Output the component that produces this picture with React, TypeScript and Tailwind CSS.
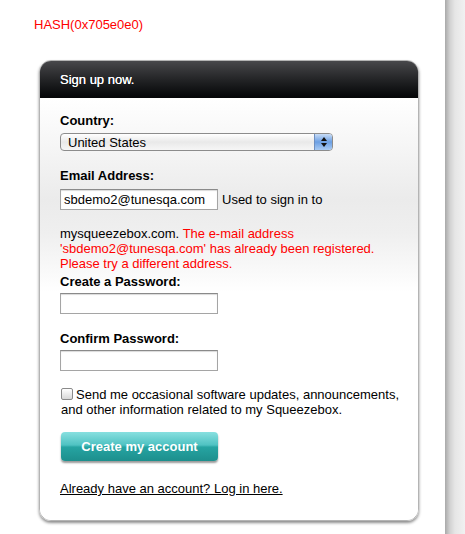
import React from "react";

function TextInput({ value }: { value?: string }) {
  return (
    <div className="w-[158px] h-[21px] bg-white border border-[#a5a5a5] border-t-[#8a8a8a] shadow-[inset_0_1px_1px_rgba(0,0,0,0.15)] px-[3px] flex items-center text-[13px] text-black">
      {value}
    </div>
  );
}

export default function App() {
  return (
    <div
      className="flex w-[465px] h-[534px] bg-white overflow-hidden text-[13px] leading-[15px] text-black"
      style={{ fontFamily: '"Liberation Sans", Arial, sans-serif' }}
    >
      <div className="flex-1">
        <p className="ml-[34px] mt-[17px] text-[#ff0000]">HASH(0x705e0e0)</p>

        <div className="ml-[39px] mt-[28px] w-[380px] rounded-[12px] border border-[#b4b4b4] shadow-[0_2px_3px_rgba(0,0,0,0.45)] overflow-hidden">
          <div className="h-[37px] bg-gradient-to-b from-[#48484b] to-[#050607] pl-[20px] flex items-center text-white [text-shadow:0_0_0.4px_#fff]">
            Sign up now.
          </div>

          <div className="pl-[20px] pr-[8px] pt-[15px] pb-[24px] bg-[linear-gradient(to_bottom,#ffffff_0%,#ebebeb_24%,#efefef_32%,#ffffff_46%,#ffffff_100%)]">
            <p className="font-bold">Country:</p>
            <div className="mt-[5px] w-[273px] h-[18px] rounded-[4px] border border-[#8c8c8c] bg-gradient-to-b from-white via-[#e9e9e9] to-[#f6f6f6] flex items-center overflow-hidden">
              <span className="pl-[7px] flex-1">United States</span>
              <div className="w-[18px] h-full bg-gradient-to-b from-[#c8dcf6] via-[#6b9fe3] to-[#a9cbf3] border-l border-[#6e8fc0] flex flex-col items-center justify-center gap-[2px]">
                <svg width="6" height="4" viewBox="0 0 6 4">
                  <path d="M3 0 L6 4 L0 4 Z" fill="#111" />
                </svg>
                <svg width="6" height="4" viewBox="0 0 6 4">
                  <path d="M0 0 L6 0 L3 4 Z" fill="#111" />
                </svg>
              </div>
            </div>

            <p className="font-bold mt-[17px]">Email Address:</p>
            <div className="mt-[6px] flex items-center">
              <TextInput value="sbdemo2@tunesqa.com" />
              <span className="ml-[4px]">Used to sign in to</span>
            </div>
            <p className="mt-[16px] pr-[12px]">
              mysqueezebox.com.{" "}
              <span className="text-[#ff0000]">
                The e-mail address 'sbdemo2@tunesqa.com' has already been registered. Please try a
                different address.
              </span>
            </p>

            <p className="font-bold mt-[3px]">Create a Password:</p>
            <div className="mt-[4px]">
              <TextInput />
            </div>

            <p className="font-bold mt-[17px]">Confirm Password:</p>
            <div className="mt-[4px]">
              <TextInput />
            </div>

            <div className="mt-[16px] pl-[1px]">
              <span className="inline-block align-[-1px] w-[12px] h-[12px] rounded-[2px] border border-[#8a8a8a] bg-gradient-to-b from-white to-[#d8d8d8] mr-[3px]" />
              Send me occasional software updates, announcements, and other information related to
              my Squeezebox.
            </div>

            <button className="mt-[15px] ml-[1px] w-[157px] h-[29px] rounded-[4px] bg-[linear-gradient(to_bottom,#88e0e0_0%,#4fc2c2_45%,#26a4a2_52%,#1d8f8d_100%)] shadow-[0_2px_2px_rgba(0,0,0,0.4)] text-white font-bold text-[13px] flex items-center justify-center pb-[1px]">
              Create my account
            </button>

            <p className="mt-[20px]">
              <a href="#" className="underline text-black">
                Already have an account? Log in here.
              </a>
            </p>
          </div>
        </div>
      </div>
      <div className="w-[20px] h-full bg-[linear-gradient(to_right,#a9a9a9_0%,#d2d2d2_25%,#e6e6e6_50%,#f1f1f1_100%)]" />
    </div>
  );
}
